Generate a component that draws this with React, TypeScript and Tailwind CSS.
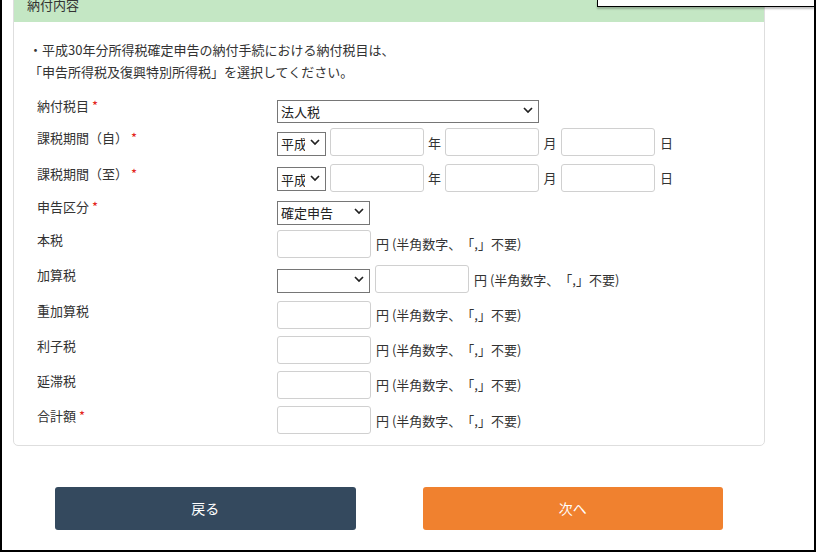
import React from "react";

type Row = {
  label: string;
  required?: boolean;
  kind: "yen" | "yenWithSelect";
};

const yenRows: Row[] = [
  { label: "本税", kind: "yen" },
  { label: "加算税", kind: "yenWithSelect" },
  { label: "重加算税", kind: "yen" },
  { label: "利子税", kind: "yen" },
  { label: "延滞税", kind: "yen" },
  { label: "合計額", required: true, kind: "yen" },
];

const Chevron: React.FC = () => (
  <svg
    className="pointer-events-none absolute right-[6px] top-1/2 -translate-y-1/2"
    width="10"
    height="7"
    viewBox="0 0 10 7"
  >
    <path d="M1 1.5 L5 5.5 L9 1.5" fill="none" stroke="#222" strokeWidth="1.7" />
  </svg>
);

const Select: React.FC<{ value: string; width: string; height: string }> = ({
  value,
  width,
  height,
}) => (
  <div className={`relative ${width} ${height}`}>
    <select
      defaultValue={value}
      className="h-full w-full appearance-none border border-[#767676] bg-white pl-[3px] pr-5 text-[13px] text-[#222] outline-none"
    >
      <option value={value}>{value}</option>
    </select>
    <Chevron />
  </div>
);

const TextBox: React.FC<{ width?: string }> = ({ width = "w-[94px]" }) => (
  <input
    type="text"
    className={`${width} h-[28px] rounded-[3px] border border-[#d0d0d0] bg-white px-2 text-[13px] outline-none`}
  />
);

// labels sit a little above the control's centre line
const Label: React.FC<{ text: string; required?: boolean }> = ({ text, required }) => (
  <div className="w-[240px] shrink-0 -translate-y-[4px] text-[13px] leading-[20px] text-[#333]">
    {text}
    {required && <span className="ml-[3px] text-[#e3231a]">*</span>}
  </div>
);

const YenNote: React.FC = () => (
  <span className="ml-[5px] text-[13px] text-[#333]">円 (半角数字、「,」不要)</span>
);

const PeriodRow: React.FC<{ label: string }> = ({ label }) => (
  <div className="flex items-center">
    <Label text={label} required />
    <div className="flex items-center">
      <Select value="平成" width="w-[49px]" height="h-[24px]" />
      <div className="ml-[4px]">
        <TextBox />
      </div>
      <span className="w-[21px] text-center text-[13px] text-[#333]">年</span>
      <TextBox />
      <span className="w-[22px] text-center text-[13px] text-[#333]">月</span>
      <TextBox />
      <span className="w-[23px] text-center text-[13px] text-[#333]">日</span>
    </div>
  </div>
);

const App: React.FC = () => {
  return (
    <div
      className="relative h-[552px] w-[816px] overflow-hidden border-2 border-t-0 border-black bg-white [text-spacing-trim:space-all]"
      style={{ fontFamily: '"Noto Sans CJK JP", "Noto Sans", sans-serif' }}
    >
      {/* dropdown overlay peeking in from the top edge */}
      <div className="absolute right-0 top-0 h-[7px] w-[217px] border-b border-l border-black bg-white shadow-[0_2px_2px_rgba(0,0,0,0.25)]" />

      <div className="mx-[11px] -mt-[14px] w-[752px]">
        <div className="rounded-b-[5px] border border-[#dedede]">
          <div className="flex h-[35px] items-center bg-[#c4e7c4] pl-[13px] text-[13px] text-[#333]">
            納付内容
          </div>

          <div className="px-[15px] pb-[11px] pt-[17px]">
            <p className="text-[13px] leading-[22px] text-[#333]">
              ・平成30年分所得税確定申告の納付手続における納付税目は、
              <br />
              「申告所得税及復興特別所得税」を選択してください。
            </p>

            <div className="mt-[15px] flex flex-col gap-[7.25px] pl-[8px]">
              <div className="flex items-center">
                <Label text="納付税目" required />
                <Select value="法人税" width="w-[262px]" height="h-[23px]" />
              </div>

              <PeriodRow label="課税期間（自）" />
              <PeriodRow label="課税期間（至）" />

              <div className="flex items-center">
                <Label text="申告区分" required />
                <Select value="確定申告" width="w-[93px]" height="h-[24px]" />
              </div>

              {yenRows.map((row) => (
                <div key={row.label} className="flex items-center">
                  <Label text={row.label} required={row.required} />
                  {row.kind === "yenWithSelect" ? (
                    <div className="flex items-center">
                      <Select value="" width="w-[93px]" height="h-[24px]" />
                      <div className="ml-[5px]">
                        <TextBox />
                      </div>
                    </div>
                  ) : (
                    <TextBox />
                  )}
                  <YenNote />
                </div>
              ))}
            </div>
          </div>
        </div>

        <div className="mt-[41px] flex gap-[67px] px-[42px]">
          <button className="h-[43px] flex-1 rounded-[3px] bg-[#34495e] text-[14px] text-white">
            戻る
          </button>
          <button className="h-[43px] flex-1 rounded-[3px] bg-[#f0812f] text-[14px] text-white">
            次へ
          </button>
        </div>
      </div>
    </div>
  );
};

export default App;
